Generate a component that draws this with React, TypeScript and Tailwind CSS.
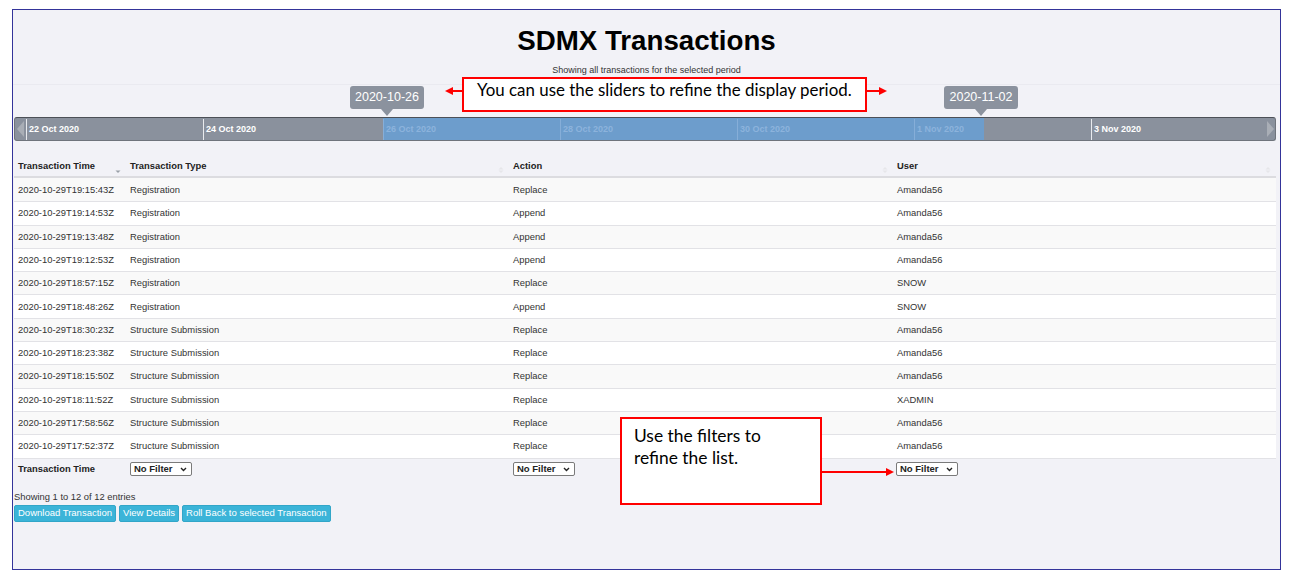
import React from "react";

const sans = { fontFamily: '"Liberation Sans", Arial, sans-serif' };
const callout = { fontFamily: 'Lato, "Open Sans", sans-serif' };

const ticks = [
  { x: 11, label: "22 Oct 2020" },
  { x: 188, label: "24 Oct 2020" },
  { x: 368, label: "26 Oct 2020" },
  { x: 545, label: "28 Oct 2020" },
  { x: 722, label: "30 Oct 2020" },
  { x: 899, label: "1 Nov 2020" },
  { x: 1076, label: "3 Nov 2020" },
];
const rangeStart = 368;
const rangeEnd = 969;

const rows = [
  ["2020-10-29T19:15:43Z", "Registration", "Replace", "Amanda56"],
  ["2020-10-29T19:14:53Z", "Registration", "Append", "Amanda56"],
  ["2020-10-29T19:13:48Z", "Registration", "Append", "Amanda56"],
  ["2020-10-29T19:12:53Z", "Registration", "Append", "Amanda56"],
  ["2020-10-29T18:57:15Z", "Registration", "Replace", "SNOW"],
  ["2020-10-29T18:48:26Z", "Registration", "Append", "SNOW"],
  ["2020-10-29T18:30:23Z", "Structure Submission", "Replace", "Amanda56"],
  ["2020-10-29T18:23:38Z", "Structure Submission", "Replace", "Amanda56"],
  ["2020-10-29T18:15:50Z", "Structure Submission", "Replace", "Amanda56"],
  ["2020-10-29T18:11:52Z", "Structure Submission", "Replace", "XADMIN"],
  ["2020-10-29T17:58:56Z", "Structure Submission", "Replace", "Amanda56"],
  ["2020-10-29T17:52:37Z", "Structure Submission", "Replace", "Amanda56"],
];

const cols = "grid grid-cols-[112px_383px_384px_1fr]";

const SortIcon = ({ active }: { active?: boolean }) => (
  <svg width="6" height="8" viewBox="0 0 6 8" className="absolute right-[5px] top-[9px]">
    {active ? (
      <path d="M0.5 4.5 L5.5 4.5 L3 7 Z" fill="#9aa0a8" />
    ) : (
      <>
        <path d="M0.5 3.5 L5.5 3.5 L3 1 Z" fill="#e6e6ea" />
        <path d="M0.5 4.5 L5.5 4.5 L3 7 Z" fill="#e6e6ea" />
      </>
    )}
  </svg>
);

const FilterSelect = () => (
  <div className="w-[62px] h-[14px] bg-white border border-[#7a7a7a] rounded-[2px] flex items-center justify-between pl-[3px] pr-[4px]">
    <span className="text-[9.5px] font-bold text-[#222] leading-none">No Filter</span>
    <svg width="7" height="5" viewBox="0 0 7 5">
      <path d="M1 1 L3.5 3.5 L6 1" fill="none" stroke="#222" strokeWidth="1.4" />
    </svg>
  </div>
);

const Tooltip = ({ center, text }: { center: number; text: string }) => (
  <div className="absolute top-[-32px] w-[74px] h-[23px]" style={{ left: center - 37 }}>
    <div className="w-full h-full bg-[#8b929e] rounded-[3px] flex items-center justify-center text-white text-[12.5px]">
      {text}
    </div>
    <div className="mx-auto w-0 h-0 border-l-[6px] border-r-[6px] border-t-[7px] border-l-transparent border-r-transparent border-t-[#8b929e]" />
  </div>
);

const Arrow = ({ x, y, len, dir }: { x: number; y: number; len: number; dir: "left" | "right" }) => (
  <svg className="absolute" style={{ left: x, top: y - 5 }} width={len} height="10" viewBox={`0 0 ${len} 10`}>
    {dir === "left" ? (
      <>
        <line x1={6} y1={5} x2={len} y2={5} stroke="#ff0000" strokeWidth="2" />
        <path d={`M0 5 L8 1 L8 9 Z`} fill="#ff0000" />
      </>
    ) : (
      <>
        <line x1={0} y1={5} x2={len - 6} y2={5} stroke="#ff0000" strokeWidth="2" />
        <path d={`M${len} 5 L${len - 8} 1 L${len - 8} 9 Z`} fill="#ff0000" />
      </>
    )}
  </svg>
);

export default function App() {
  return (
    <div className="relative w-[1293px] h-[586px] bg-white overflow-hidden" style={sans}>
      <div className="ml-[12px] mt-[9px] w-[1269px] h-[561px] border border-[#34349a] bg-[#f2f2f7] flex flex-col text-[#333]">
        <h1 className="mt-[15px] text-center text-[27.7px] leading-[32px] font-bold text-black">SDMX Transactions</h1>
        <p className="mt-[7px] text-center text-[9px] leading-[12px] text-[#333]">Showing all transactions for the selected period</p>
        <div className="mt-[8px] border-t border-[#eaeaf0]" />

        {/* timeline slider */}
        <div className="relative ml-[1px] mt-[32px] w-[1262px] h-[24px] rounded-[3px] bg-[#8a919d] border border-[#6f747c] border-t-[#4c5057]">
          <div className="absolute left-0 top-0 h-full w-[10px] flex items-center justify-center">
            <div className="w-0 h-0 border-t-[8px] border-b-[8px] border-r-[7px] border-t-transparent border-b-transparent border-r-[#a9aeb6]" />
          </div>
          <div className="absolute right-0 top-0 h-full w-[10px] flex items-center justify-center">
            <div className="w-0 h-0 border-t-[8px] border-b-[8px] border-l-[7px] border-t-transparent border-b-transparent border-l-[#a9aeb6]" />
          </div>
          <div
            className="absolute top-0 h-full bg-[#6d9dcc]"
            style={{ left: rangeStart, width: rangeEnd - rangeStart }}
          />
          {ticks.map((t) => {
            const inRange = t.x >= rangeStart && t.x < rangeEnd;
            return (
              <div key={t.label} className="absolute top-0 h-full flex items-center pt-[1px]" style={{ left: t.x }}>
                <div className={`h-full w-px ${inRange ? "bg-[#86aed8]" : "bg-[#e8eaee]"}`} />
                <span className={`ml-[2px] text-[9px] font-bold whitespace-nowrap ${inRange ? "text-[#8cb3dc]" : "text-white"}`}>
                  {t.label}
                </span>
              </div>
            );
          })}
          <Tooltip center={372} text="2020-10-26" />
          <Tooltip center={966} text="2020-11-02" />
        </div>

        {/* table */}
        <div className="ml-[1px] mt-[14px] w-[1262px] text-[9.4px]">
          <div className={`${cols} h-[23px] pt-[2px] border-b-2 border-[#dcdce0] font-bold text-[#222]`}>
            {["Transaction Time", "Transaction Type", "Action", "User"].map((h, i) => (
              <div key={h} className="relative flex items-center pl-[4px]">
                {h}
                <SortIcon active={i === 0} />
              </div>
            ))}
          </div>
          {rows.map((r, i) => (
            <div
              key={r[0]}
              className={`${cols} h-[23.3px] border-t border-[#e2e2e6] ${i % 2 === 0 ? "bg-[#f9f9f9]" : "bg-white"} ${i === 0 ? "border-t-0" : ""}`}
            >
              {r.map((c, j) => (
                <div key={j} className="flex items-center pl-[4px]">
                  {c}
                </div>
              ))}
            </div>
          ))}
          <div className={`${cols} h-[22px] border-t border-[#e2e2e6]`}>
            <div className="flex items-center pl-[4px] font-bold text-[#222]">Transaction Time</div>
            <div className="flex items-center pl-[4px]">
              <FilterSelect />
            </div>
            <div className="flex items-center pl-[4px]">
              <FilterSelect />
            </div>
            <div className="flex items-center pl-[3px]">
              <FilterSelect />
            </div>
          </div>
        </div>

        <p className="ml-[1px] mt-[11px] text-[9.4px] leading-[12px] text-[#333]">Showing 1 to 12 of 12 entries</p>
        <div className="ml-[1px] mt-[2px] flex gap-[3px]">
          {["Download Transaction", "View Details", "Roll Back to selected Transaction"].map((b) => (
            <button
              key={b}
              className="h-[17px] px-[3px] rounded-[2px] bg-[#3bb4d8] border border-[#32a6c8] text-white text-[9.5px] leading-none"
            >
              {b}
            </button>
          ))}
        </div>
      </div>

      {/* annotations */}
      <div className="absolute left-[462px] top-[77px] w-[405px] h-[35px] bg-white border-2 border-[#ff0000] pl-[13px] text-[16.9px] leading-[22px] text-black whitespace-nowrap" style={callout}>
        You can use the sliders to refine the display period.
      </div>
      <Arrow x={445} y={91} len={18} dir="left" />
      <Arrow x={867} y={91} len={20} dir="right" />

      <div className="absolute left-[620px] top-[417px] w-[202px] h-[88px] bg-white border-2 border-[#ff0000] pl-[12px] pt-[6px] text-[17.4px] leading-[21.5px] text-black" style={callout}>
        Use the filters to
        <br />
        refine the list.
      </div>
      <Arrow x={822} y={472} len={72} dir="right" />
    </div>
  );
}
